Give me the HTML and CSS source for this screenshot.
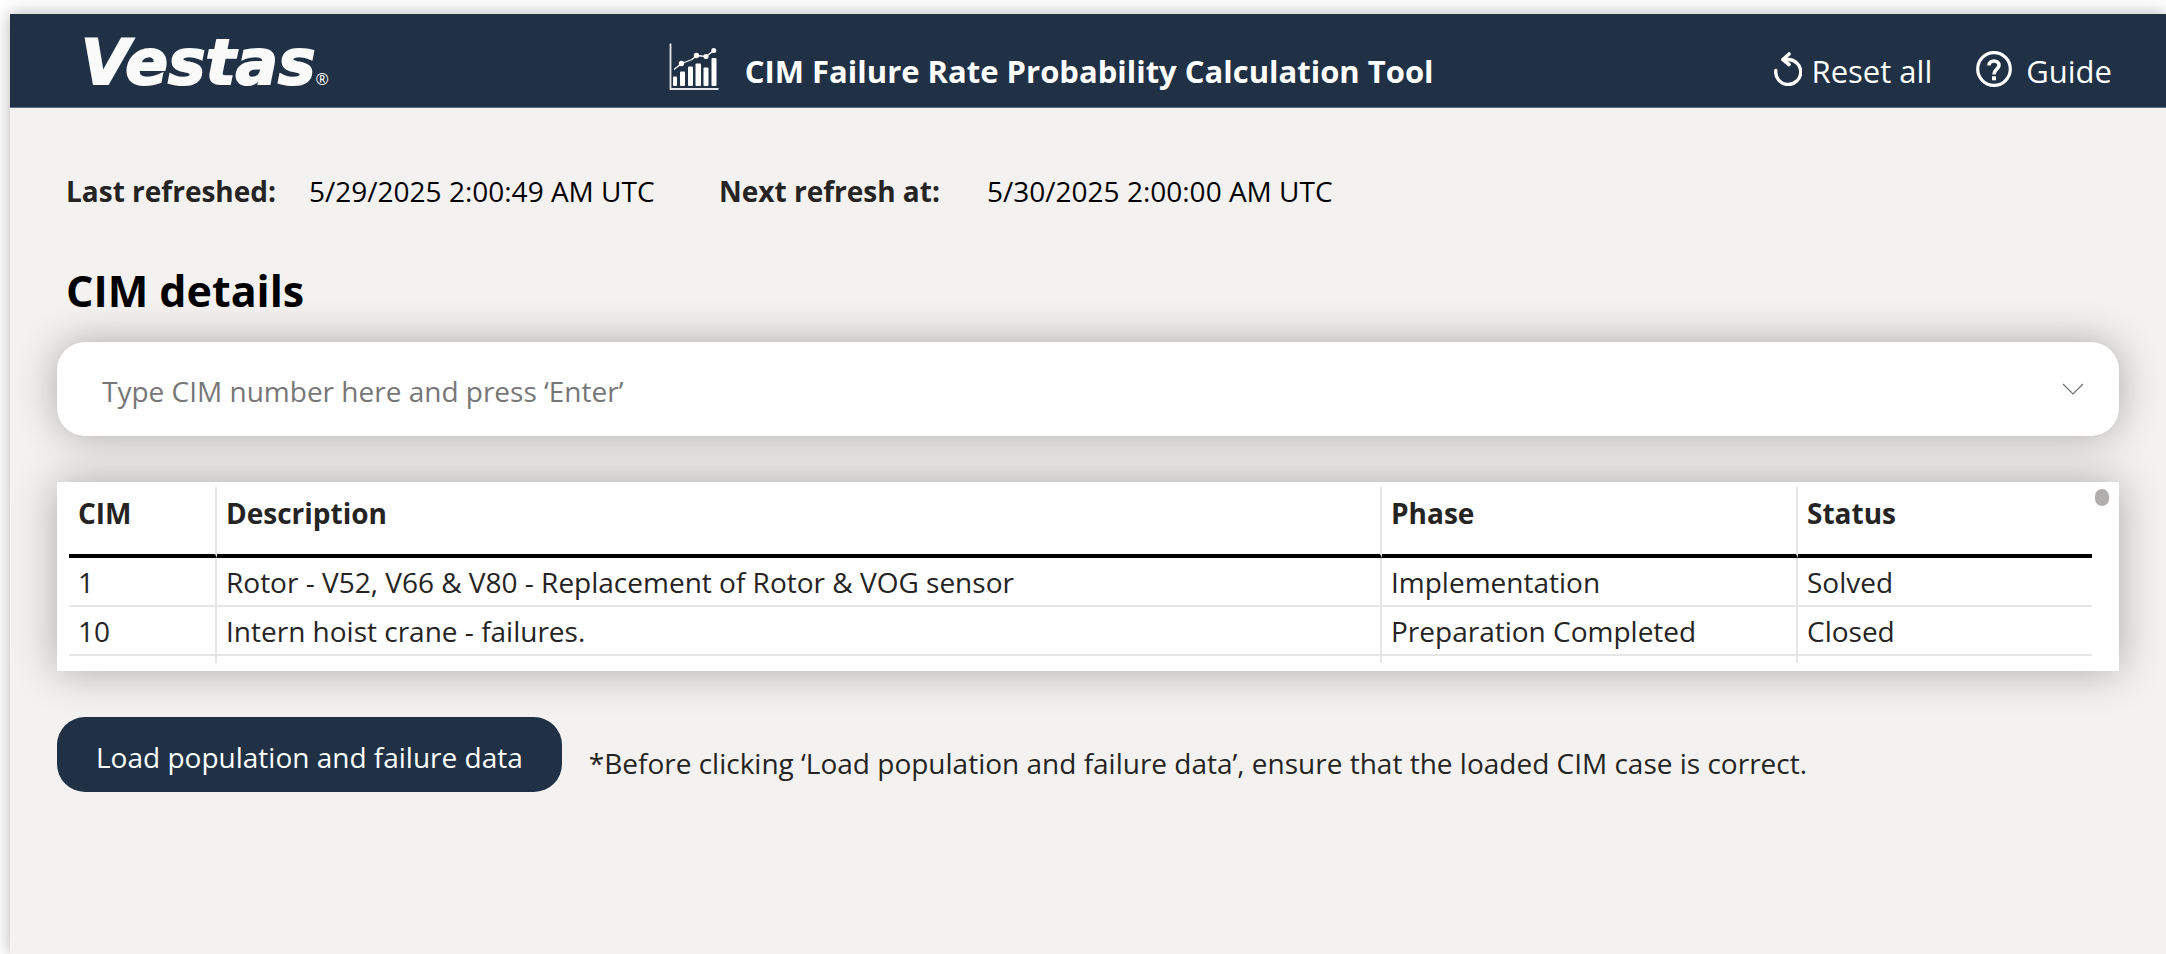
FILE: index.html
```html
<!DOCTYPE html>
<html lang="en">
<head>
<meta charset="utf-8">
<meta name="viewport" content="width=device-width, initial-scale=1">
<title>CIM Failure Rate Probability Calculation Tool</title>
<link rel="stylesheet" href="styles.css">
</head>
<body>
<div class="page">
  <header class="topbar">
    <div class="brand"><span class="brand-name">Vestas</span><span class="brand-mark">®</span></div>
    <div class="title-group">
      <svg class="title-icon" viewBox="0 0 50 48" aria-hidden="true">
        <path d="M1.5 0.500V46H49.500" fill="none" stroke="#e4e8ec" stroke-width="1.800"/>
        <g fill="#fff">
          <rect x="4" y="33.500" width="4" height="9.500" rx="1"/>
          <rect x="11" y="28.500" width="5" height="14.500" rx="1"/>
          <rect x="19" y="23.500" width="5" height="19.500" rx="1"/>
          <rect x="26.500" y="20.500" width="5.500" height="22.500" rx="1"/>
          <rect x="34.500" y="24.500" width="5" height="18.500" rx="1"/>
          <rect x="42.500" y="15" width="5" height="28" rx="1"/>
          <circle cx="12.500" cy="20.500" r="2.700"/>
          <circle cx="27.500" cy="12.500" r="2.700"/>
          <circle cx="37" cy="13.500" r="2.500"/>
          <circle cx="44.800" cy="7.500" r="2.500"/>
        </g>
        <path d="M5 26.500L12.500 20.500L23 16.500L27.500 12.500L37 13.500L44.800 7.500" fill="none" stroke="#fff" stroke-width="1.300"/>
      </svg>
      <h1 class="title">CIM Failure Rate Probability Calculation Tool</h1>
    </div>
    <nav class="actions">
      <button class="action action-reset" type="button">
        <svg class="icon-reset" viewBox="0 0 28 34" aria-hidden="true">
          <path d="M9 7.500H13.500A12.500 12.500 0 1 1 1.800 18.500" fill="none" stroke="#fff" stroke-width="3.400" stroke-linecap="round"/>
          <path d="M15 2L9 7.500L15 12.500" fill="none" stroke="#fff" stroke-width="3.600" stroke-linecap="round" stroke-linejoin="round"/>
        </svg>
        <span class="action-label">Reset all</span>
      </button>
      <button class="action action-guide" type="button">
        <svg class="icon-guide" viewBox="0 0 36 36" aria-hidden="true">
          <circle cx="18" cy="18" r="16.300" fill="none" stroke="#fff" stroke-width="3.200"/>
          <path d="M13 14.500C13 11.500 15.200 10 18 10S23 11.700 23 14.300C23 18 18 18.300 18 23.500" fill="none" stroke="#fff" stroke-width="3.600"/>
          <rect x="16" y="25.300" width="4" height="4" fill="#fff"/>
        </svg>
        <span class="action-label">Guide</span>
      </button>
    </nav>
  </header>

  <main class="content">
    <dl class="refresh">
      <dt>Last refreshed:</dt><dd>5/29/2025 2:00:49 AM UTC</dd>
      <dt>Next refresh at:</dt><dd>5/30/2025 2:00:00 AM UTC</dd>
    </dl>

    <h2 class="section-title">CIM details</h2>

    <div class="search">
      <input class="search-input" type="text" aria-label="CIM number" placeholder="Type CIM number here and press ‘Enter’">
      <button class="search-toggle" type="button" aria-label="Show CIM list">
        <svg class="icon-chevron" viewBox="0 0 22 12" aria-hidden="true"><path d="M1 1L11 11L21 1" fill="none" stroke="#6b7078" stroke-width="1.200"/></svg>
      </button>
    </div>

    <div class="table-card">
      <table class="cim-table">
        <colgroup><col class="col-cim"><col class="col-description"><col class="col-phase"><col class="col-status"></colgroup>
        <thead>
          <tr><th scope="col">CIM</th><th scope="col">Description</th><th scope="col">Phase</th><th scope="col">Status</th></tr>
        </thead>
        <tbody>
          <tr><td>1</td><td>Rotor - V52, V66 &amp; V80 - Replacement of Rotor &amp; VOG sensor</td><td>Implementation</td><td>Solved</td></tr>
          <tr><td>10</td><td>Intern hoist crane - failures.</td><td>Preparation Completed</td><td>Closed</td></tr>
          <tr class="row-clipped"><td></td><td></td><td></td><td></td></tr>
        </tbody>
      </table>
      <span class="scroll-thumb"></span>
    </div>

    <div class="load">
      <button class="load-button" type="button">Load population and failure data</button>
      <p class="load-note">*Before clicking ‘Load population and failure data’, ensure that the loaded CIM case is correct.</p>
    </div>
  </main>
</div>
</body>
</html>
```
FILE: styles.css
```css
* {
  box-sizing: border-box;
}

body {
  margin: 0;
  padding: 14px 0 0 10px;
  min-height: 100vh;
  display: flex;
  overflow-x: hidden;
  background: #fff;
  color: #252423;
  font-family: "Open Sans", "Noto Sans", sans-serif;
  font-size: 28px;
  line-height: 40px;
}

button,
input {
  font: inherit;
  border: 0;
  padding: 0;
  background: none;
}

.page {
  flex: 1;
  background: #f3f2f0;
  box-shadow: 0 0 16px rgba(0, 0, 0, 0.3);
}

.topbar {
  display: flex;
  align-items: center;
  justify-content: space-between;
  height: 94px;
  padding: 0 54px 0 71px;
  border-bottom: 1px solid #5d6b7a;
  background: #203146;
  color: #fff;
}

.brand {
  display: flex;
  align-items: flex-end;
  padding-top: 4px;
  color: #fafafa;
}

.brand-name {
  font-family: "DejaVu Sans", sans-serif;
  font-size: 63px;
  font-style: italic;
  font-weight: 700;
  line-height: 64px;
  -webkit-text-stroke: 2px #fafafa;
}

.brand-mark {
  font-size: 16px;
  line-height: 32px;
}

.title-group {
  display: flex;
  align-items: center;
  gap: 26px;
  padding-top: 13px;
}

.title-icon {
  width: 50px;
  height: 48px;
}

.title {
  margin: 0;
  padding-top: 8px;
  font-size: 31px;
  font-weight: 700;
  line-height: 40px;
}

.actions {
  display: flex;
  gap: 44px;
  padding-top: 16px;
}

.action {
  display: flex;
  align-items: center;
  color: #fff;
  font-size: 31px;
}

.action-label {
  padding-top: 5px;
}

.action-reset {
  gap: 10px;
}

.action-guide {
  gap: 14px;
}

.icon-reset {
  width: 28px;
  height: 34px;
}

.icon-guide {
  width: 36px;
  height: 36px;
}

.content {
  padding: 63px 47px 40px;
}

.refresh {
  display: grid;
  grid-template-columns: 243px 410px 268px auto;
  margin: 0;
  padding: 0 9px;
}

.refresh dt {
  font-weight: 700;
}

.refresh dd {
  margin: 0;
  color: #000;
}

.section-title {
  margin: 50px 0 21px;
  padding: 0 9px;
  color: #000;
  font-size: 43px;
  font-weight: 700;
  line-height: 60px;
}

.search {
  display: flex;
  align-items: center;
  height: 94px;
  padding: 4px 35px 0 45px;
  border-radius: 28px;
  background: #fff;
  box-shadow: 0 0 40px rgba(0, 0, 0, 0.3);
}

.search-input {
  flex: 1;
  color: #252423;
}

.search-input::placeholder {
  color: #777;
  opacity: 1;
}

.search-toggle {
  display: flex;
  padding-bottom: 5px;
}

.icon-chevron {
  width: 22px;
  height: 12px;
}

.table-card {
  position: relative;
  margin-top: 46px;
  padding: 5px 27px 8px 12px;
  background: #fff;
  box-shadow: 0 0 40px rgba(0, 0, 0, 0.3);
}

.cim-table {
  width: 100%;
  table-layout: fixed;
  border-spacing: 0;
  text-align: left;
}

.col-cim {
  width: 148px;
}

.col-phase {
  width: 416px;
}

.col-status {
  width: 294px;
}

.cim-table th,
.cim-table td {
  padding: 0 9px;
  border-right: 2px solid #e6e6e6;
  border-bottom: 2px solid #e6e6e6;
}

.cim-table th:last-child,
.cim-table td:last-child {
  border-right: 0;
}

.cim-table th {
  height: 71px;
  padding-top: 6px;
  border-bottom: 4px solid #000;
  vertical-align: top;
}

.cim-table td {
  height: 49px;
}

.cim-table .row-clipped td {
  height: 7px;
  border-bottom: 0;
}

.scroll-thumb {
  position: absolute;
  top: 7px;
  right: 10px;
  width: 14px;
  height: 17px;
  border-radius: 7px;
  background: #b0afae;
}

.load {
  display: flex;
  align-items: center;
  gap: 27px;
  margin-top: 46px;
}

.load-button {
  height: 75px;
  padding: 4px 39px 0;
  border-radius: 28px;
  background: #203146;
  color: #fff;
}

.load-note {
  margin: 0;
  padding-top: 16px;
}
```
